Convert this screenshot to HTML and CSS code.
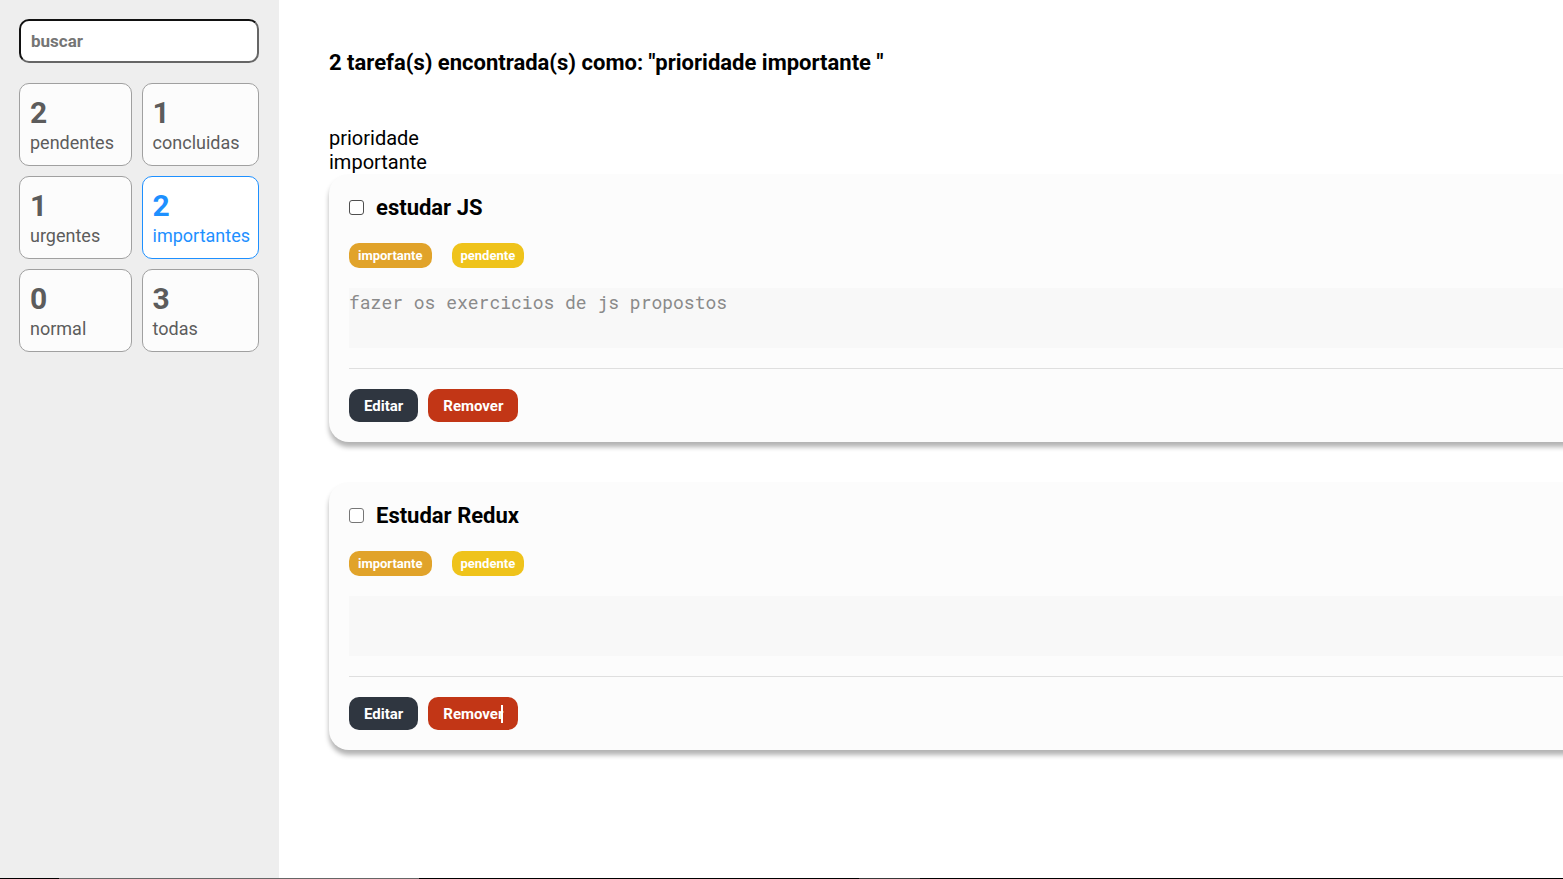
FILE: index.html
```html
<!DOCTYPE html>
<html lang="pt-BR">
<head>
<meta charset="utf-8">
<title>Tarefas</title>
<link rel="stylesheet" href="styles.css">
</head>
<body>
<div class="app">
  <aside class="sidebar">
    <input class="search" type="search" placeholder="buscar" aria-label="buscar">
    <div class="filters">
      <button class="filter" type="button"><strong class="count">2</strong><span class="name">pendentes</span></button>
      <button class="filter" type="button"><strong class="count">1</strong><span class="name">concluidas</span></button>
      <button class="filter" type="button"><strong class="count">1</strong><span class="name">urgentes</span></button>
      <button class="filter filter-active" type="button"><strong class="count">2</strong><span class="name">importantes</span></button>
      <button class="filter" type="button"><strong class="count">0</strong><span class="name">normal</span></button>
      <button class="filter" type="button"><strong class="count">3</strong><span class="name">todas</span></button>
    </div>
  </aside>
  <main class="content">
    <h1 class="summary">2 tarefa(s) encontrada(s) como: "prioridade importante "</h1>
    <p class="group">prioridade<br>importante</p>
    <div class="tasks">
      <article class="task">
        <div class="title">
          <input class="check check-hover" type="checkbox" id="task-1">
          <label for="task-1">estudar JS</label>
        </div>
        <div class="tags"><span class="tag tag-priority">importante</span><span class="tag tag-status">pendente</span></div>
        <textarea class="description" aria-label="Descrição de estudar JS" readonly>fazer os exercicios de js propostos</textarea>
        <div class="actions">
          <button class="action edit" type="button">Editar</button>
          <button class="action remove" type="button">Remover</button>
        </div>
      </article>
      <article class="task">
        <div class="title">
          <input class="check" type="checkbox" id="task-2">
          <label for="task-2">Estudar Redux</label>
        </div>
        <div class="tags"><span class="tag tag-priority">importante</span><span class="tag tag-status">pendente</span></div>
        <textarea class="description" aria-label="Descrição de Estudar Redux" readonly></textarea>
        <div class="actions">
          <button class="action edit" type="button">Editar</button>
          <button class="action remove" type="button">Remover<span class="caret"></span></button>
        </div>
      </article>
    </div>
  </main>
</div>
<div class="taskbar"></div>
</body>
</html>
```
FILE: styles.css
```css
* { box-sizing: border-box; }
body {
  margin: 0;
  min-height: 100vh;
  display: flex;
  flex-direction: column;
  overflow: hidden;
  font-family: Roboto, "Liberation Sans", sans-serif;
  background: #fff;
  color: #000;
}
button, input { font-family: inherit; }
.app { flex: 1; display: flex; }
.sidebar {
  flex: none;
  width: 279px;
  padding: 19px 20px 20px 19px;
  background: #eee;
}
.search {
  display: block;
  width: 100%;
  height: 44px;
  padding: 0 10px;
  border: 2px solid;
  border-color: #111 #666 #666 #111;
  border-radius: 10px;
  background: #fff;
  font-size: 17px;
  font-weight: 700;
  appearance: none;
  outline: none;
}
.search::placeholder { color: #757575; }
.filters {
  display: grid;
  grid-template-columns: 1fr auto;
  gap: 10px;
  margin-top: 20px;
}
.filter {
  display: flex;
  flex-direction: column;
  align-items: flex-start;
  padding: 11px 8px 9px 10px;
  border: 1px solid #a0a0a0;
  border-radius: 10px;
  background: #fcfcfc;
  color: #5c5c5c;
}
.filter-active { border-color: #1e90ff; background: #fff; color: #1e90ff; }
.count { font-size: 30px; line-height: 35px; font-weight: 700; }
.name { font-size: 18px; line-height: 26px; font-weight: 400; }
.content { flex: 1; min-width: 0; padding: 48px 0 40px 50px; }
.summary { margin: 0; font-size: 22px; line-height: 29px; font-weight: 700; }
.group { margin: 49px 0 0; font-size: 20px; line-height: 24px; font-weight: 400; }
.tasks {
  display: flex;
  flex-direction: column;
  gap: 40px;
  margin-right: -50px;
}
.task {
  padding: 20px;
  border-radius: 20px;
  background: #fcfcfc;
  box-shadow: 0 5px 5px rgba(0, 0, 0, 0.3);
}
.title {
  display: flex;
  align-items: center;
  gap: 12px;
  font-size: 22px;
  line-height: 27px;
  font-weight: 700;
}
.check {
  width: 15px;
  height: 15px;
  margin: 0;
  border: 1px solid #767676;
  border-radius: 3px;
  background: #fff;
  appearance: none;
}
.check:checked { background: #1e90ff; }
.check-hover { border-color: #4f4f4f; }
.tags { display: flex; gap: 20px; margin-top: 22px; }
.tag {
  padding: 0 9px;
  border-radius: 10px;
  color: #fff;
  font-size: 13px;
  line-height: 25px;
  font-weight: 700;
}
.tag-priority { background: #e1a32a; }
.tag-status { background: #efc31b; }
.description {
  display: block;
  width: 100%;
  height: 60px;
  margin: 20px 0;
  padding: 3px 0;
  border: 0;
  background: #f8f8f8;
  color: #8a8a8a;
  font-family: "Roboto Mono", "DejaVu Sans Mono", monospace;
  font-size: 18px;
  line-height: 22px;
  resize: none;
  outline: none;
}
.actions {
  display: flex;
  gap: 10px;
  padding-top: 20px;
  border-top: 1px solid #dfdfdf;
}
.action {
  position: relative;
  height: 33px;
  padding: 0 15px;
  border: 0;
  border-radius: 10px;
  color: #fff;
  font-size: 15px;
  font-weight: 700;
}
.edit { background: #2f3640; }
.remove { background: #c23616; }
.caret {
  position: absolute;
  top: 8px;
  right: 15px;
  width: 2px;
  height: 18px;
  background: #fff;
}
.taskbar {
  height: 1px;
  background: linear-gradient(90deg, #000 59px, #666 59px, #666 419px, #000 419px, #000 859px, #383838 859px, #383838 920px, #000 920px);
}
```
